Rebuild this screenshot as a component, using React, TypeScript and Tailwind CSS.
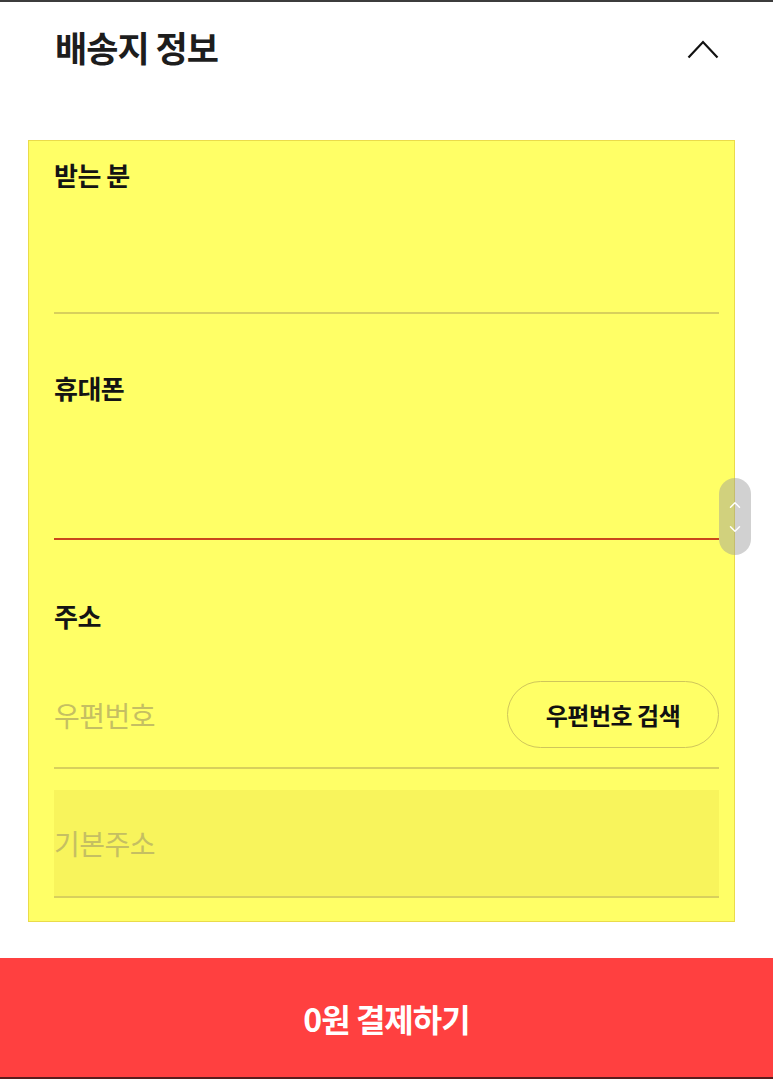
import { ChevronUp, ChevronDown } from "lucide-react"

const font = { fontFamily: '"Noto Sans CJK KR", "Noto Sans", sans-serif' }

function Label({ children }: { children: React.ReactNode }) {
  return <div className="text-[26px] leading-[34px] font-bold text-[#141414] tracking-[-0.5px]">{children}</div>
}

export default function App() {
  return (
    <div style={font} className="relative w-[773px] h-[1079px] bg-white border-t-2 border-[#3c3c3c] flex flex-col overflow-hidden">
      {/* Header */}
      <div className="h-[92px] flex items-center justify-between pl-[55px] pr-[54px]">
        <h1 className="text-[35px] leading-[44px] font-bold text-[#1d1d1d] tracking-[-1px] -mt-[3px]">배송지 정보</h1>
        <svg width="32" height="20" viewBox="0 0 32 20" fill="none" className="mt-[2px]">
          <path d="M1.5 18.5 L16 3 L30.5 18.5" stroke="#111" strokeWidth="2.2" />
        </svg>
      </div>

      {/* Form box */}
      <div className="mt-[46px] ml-[28px] w-[707px] h-[782px] border border-[#eadb4a] bg-[#ffff66] pl-[25px] pr-[15px] pt-[17px]">
        {/* 받는 분 */}
        <Label>받는 분</Label>
        <div className="h-[122px] border-b-2 border-[#d8d05c]" />

        {/* 휴대폰 */}
        <div className="mt-[57px]">
          <Label>휴대폰</Label>
        </div>
        <div className="h-[135px] border-b-2 border-[#c9461c]" />

        {/* 주소 */}
        <div className="mt-[59px]">
          <Label>주소</Label>
        </div>
        <div className="pt-[48px] pb-[19px] flex items-center justify-between border-b-2 border-[#d8d05c]">
          <span className="text-[28px] text-[#c5bf62] tracking-[-0.5px]">우편번호</span>
          <button className="w-[212px] h-[67px] rounded-full border border-[#cfc65a] text-[24px] font-bold text-[#111] tracking-[-0.5px]">
            우편번호 검색
          </button>
        </div>
        <div className="mt-[21px] h-[108px] bg-[#f8f45c] border-b-2 border-[#d8d05c] flex items-center">
          <span className="text-[28px] text-[#c5bf62] tracking-[-0.5px]">기본주소</span>
        </div>
      </div>

      {/* Scroll helper */}
      <div className="absolute left-[719px] top-[476px] w-[32px] h-[77px] rounded-full bg-[#9a9a9a]/45 flex flex-col items-center justify-center gap-[6px]">
        <ChevronUp className="w-[18px] h-[18px] text-white" strokeWidth={2} />
        <ChevronDown className="w-[18px] h-[18px] text-white" strokeWidth={2} />
      </div>

      {/* Pay button */}
      <div className="mt-[36px] h-[119px] bg-[#ff4040] flex items-center justify-center">
        <span className="text-[32px] font-bold text-white tracking-[-1px]">0원 결제하기</span>
      </div>
      <div className="h-[2px] bg-[#5a1c1c]" />
    </div>
  )
}
